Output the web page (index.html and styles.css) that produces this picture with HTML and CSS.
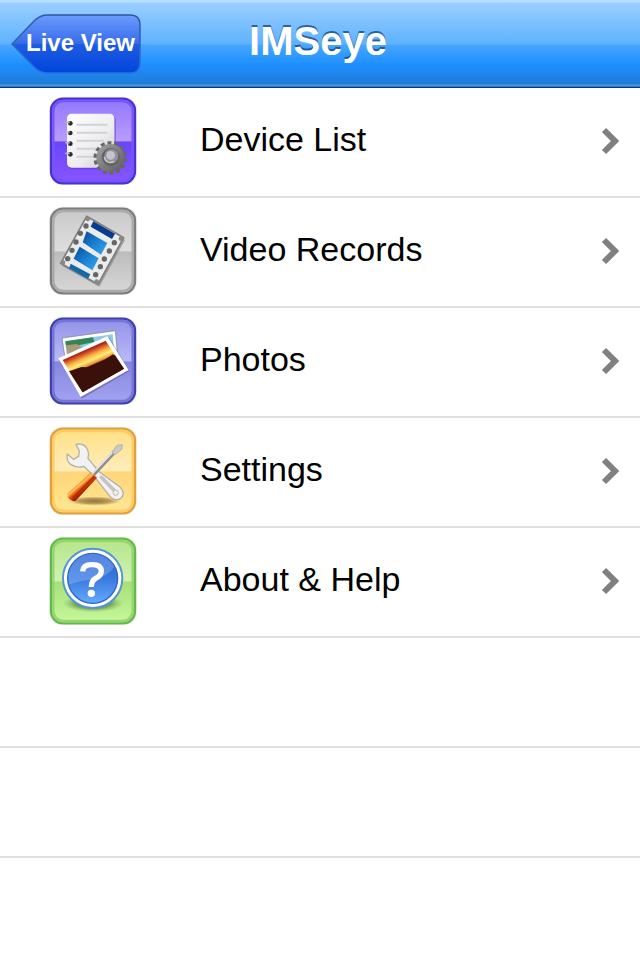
FILE: index.html
```html
<!DOCTYPE html>
<html lang="en">
<head>
<meta charset="utf-8">
<meta name="viewport" content="width=device-width">
<title>IMSeye</title>
<link rel="stylesheet" href="styles.css">
</head>
<body>
<header class="navbar">
  <button class="back" type="button">
    <svg class="back-shape" viewBox="0 0 130 60" preserveAspectRatio="none" aria-hidden="true">
      <defs>
        <linearGradient id="back-fill" x1="0" y1="0" x2="0" y2="1">
          <stop offset="0" stop-color="#6c9cff"/>
          <stop offset=".49" stop-color="#376ce9"/>
          <stop offset=".5" stop-color="#1f5ce2"/>
          <stop offset="1" stop-color="#0045dc"/>
        </linearGradient>
        <linearGradient id="back-edge" x1="0" y1="0" x2="0" y2="1">
          <stop offset="0" stop-color="#31569f"/>
          <stop offset=".5" stop-color="#2e65b8"/>
          <stop offset="1" stop-color="#2a70df"/>
        </linearGradient>
      </defs>
      <path d="M1 30 L24 6 Q30 1 36 1 H119 Q129 1 129 11 V49 Q129 59 119 59 H36 Q30 59 24 54Z" fill="url(#back-fill)" stroke="url(#back-edge)" stroke-width="1.5"/>
    </svg>
    <span class="back-label">Live View</span>
  </button>
  <h1 class="title">IMSeye</h1>
</header>
<main>
<ul class="menu">
  <li class="row"><a class="link" href="#devices">
    <svg class="icon" viewBox="0 0 294 294" aria-hidden="true">
      <defs>
        <linearGradient id="violet" x1="0" y1="0" x2="0" y2="1">
          <stop offset="0" stop-color="#9175ff"/><stop offset=".5" stop-color="#b99dff"/><stop offset=".51" stop-color="#6846fb"/><stop offset="1" stop-color="#8a55ff"/>
        </linearGradient>
        <linearGradient id="paper" x1="0" y1="0" x2="1" y2="1">
          <stop offset="0" stop-color="#fff"/><stop offset=".6" stop-color="#ededf0"/><stop offset="1" stop-color="#c4c4c8"/>
        </linearGradient>
        <linearGradient id="steel" x1="0" y1="0" x2="1" y2="1">
          <stop offset="0" stop-color="#a2a2a2"/><stop offset="1" stop-color="#5c5c5c"/>
        </linearGradient>
      </defs>
      <rect x="15" y="14" width="264" height="265" rx="40" fill="#f0f0f2"/>
      <rect x="21" y="20" width="252" height="254" rx="36" fill="url(#violet)" stroke="#4b30d4" stroke-width="7"/>
      <rect x="28" y="27" width="238" height="240" rx="30" fill="none" stroke="#7355fa" stroke-width="7"/>
      <rect x="72" y="70" width="144" height="162" rx="14" fill="#4b31a8" opacity=".4"/>
      <rect x="69" y="65" width="142" height="162" rx="14" fill="url(#paper)"/>
      <path d="M98 98H190M98 122H190M98 146H180M98 170H160M98 194H155" stroke="#d2d2d6" stroke-width="6"/>
      <g fill="#2d2b35"><circle cx="79" cy="94" r="7"/><circle cx="79" cy="123" r="7"/><circle cx="79" cy="155" r="7"/><circle cx="79" cy="187" r="7"/></g>
      <path d="M64 91H77M64 120H77M64 152H77M64 184H77" stroke="#b9b7c5" stroke-width="5"/>
      <circle cx="199" cy="198" r="45" fill="none" stroke="#666" stroke-width="11" stroke-dasharray="12 8.2"/>
      <circle cx="199" cy="198" r="42" fill="url(#steel)"/>
      <circle cx="200" cy="195" r="27" fill="#626262"/>
      <circle cx="202" cy="192" r="21" fill="#92929b"/>
      <circle cx="200" cy="190" r="13" fill="#c5c3cf"/>
      <path d="M181 195Q186 218 211 209" fill="none" stroke="#ccc" stroke-width="4"/>
    </svg>
    <span class="label">Device List</span>
    <svg class="chevron" viewBox="0 0 18 28" aria-hidden="true"><path d="M3 3 L14 14 L3 25"/></svg>
  </a></li>
  <li class="row"><a class="link" href="#videos">
    <svg class="icon" viewBox="0 0 294 294" aria-hidden="true">
      <defs>
        <linearGradient id="silver" x1="0" y1="0" x2="0" y2="1">
          <stop offset="0" stop-color="#c8c8c8"/><stop offset=".5" stop-color="#dedede"/><stop offset=".51" stop-color="#bcbcbc"/><stop offset="1" stop-color="#d8d8d8"/>
        </linearGradient>
        <linearGradient id="frame-blue" x1="0" y1="0" x2="1" y2="1">
          <stop offset="0" stop-color="#064a9b"/><stop offset=".6" stop-color="#2089d9"/><stop offset="1" stop-color="#39a5ed"/>
        </linearGradient>
      </defs>
      <rect x="15" y="14" width="264" height="265" rx="40" fill="#f2f2f2"/>
      <rect x="21" y="20" width="252" height="254" rx="36" fill="url(#silver)" stroke="#7d7d7d" stroke-width="7"/>
      <rect x="28" y="27" width="238" height="240" rx="30" fill="none" stroke="#aaa" stroke-width="7"/>
      <path d="M130 48L243 114L166 254L53 191Z" fill="#777" opacity=".55"/>
      <path d="M128 43L239 107L162 247L50 184Z" fill="#ebebeb" stroke="#7e7e7e" stroke-width="5" stroke-linejoin="round"/>
      <path d="M148 58L213 95L204 111L140 74Z" fill="#083d8c"/>
      <path d="M128 88L190 123L171 158L116 121Z" fill="url(#frame-blue)"/>
      <path d="M107 134L164 169L145 205L89 170Z" fill="url(#frame-blue)"/>
      <path d="M80 185L139 217L132 230L75 199Z" fill="#1269a5"/>
      <g fill="#666">
        <circle cx="126" cy="72" r="8"/><circle cx="109" cy="94" r="8"/><circle cx="96" cy="120" r="8"/><circle cx="84" cy="145" r="8"/><circle cx="71" cy="170" r="8"/>
        <circle cx="211" cy="122" r="8"/><circle cx="196" cy="147" r="8"/><circle cx="181" cy="171" r="8"/><circle cx="169" cy="194" r="8"/><circle cx="155" cy="218" r="8"/>
      </g>
      <g fill="#888">
        <circle cx="131" cy="51" r="7"/><circle cx="57" cy="182" r="7"/><circle cx="231" cy="110" r="7"/><circle cx="158" cy="239" r="7"/>
      </g>
    </svg>
    <span class="label">Video Records</span>
    <svg class="chevron" viewBox="0 0 18 28" aria-hidden="true"><path d="M3 3 L14 14 L3 25"/></svg>
  </a></li>
  <li class="row"><a class="link" href="#photos">
    <svg class="icon" viewBox="0 0 294 294" aria-hidden="true">
      <defs>
        <linearGradient id="indigo" x1="0" y1="0" x2="0" y2="1">
          <stop offset="0" stop-color="#9292e8"/><stop offset=".5" stop-color="#b9b9f6"/><stop offset=".51" stop-color="#8585df"/><stop offset="1" stop-color="#a4a4f2"/>
        </linearGradient>
        <linearGradient id="sunset" gradientUnits="userSpaceOnUse" x1="115" y1="105" x2="162" y2="214">
          <stop offset="0" stop-color="#8d1616"/><stop offset=".13" stop-color="#b52b19"/><stop offset=".28" stop-color="#ffac42"/><stop offset=".39" stop-color="#fff078"/><stop offset=".49" stop-color="#ed943a"/><stop offset=".53" stop-color="#35100b"/><stop offset="1" stop-color="#43150e"/>
        </linearGradient>
      </defs>
      <rect x="15" y="14" width="264" height="265" rx="40" fill="#f0f0f4"/>
      <rect x="21" y="20" width="252" height="254" rx="36" fill="url(#indigo)" stroke="#4040ad" stroke-width="7"/>
      <rect x="28" y="27" width="238" height="240" rx="30" fill="none" stroke="#7575d7" stroke-width="7"/>
      <path d="M54 78L214 56L222 145L67 163Z" fill="#fff" stroke="#75759f" stroke-width="2"/>
      <path d="M64 88L206 67L212 130L70 145Z" fill="#8fc9e9"/>
      <path d="M64 88L147 76L151 90L67 107Z" fill="#318653"/>
      <path d="M66 100L98 96L125 111L72 137Z" fill="#ab9b7b"/>
      <path d="M46 145L196 77L257 177L113 260Z" fill="#40406e" opacity=".4"/>
      <path d="M43 139L190 73L254 174L110 255Z" fill="#fff"/>
      <path d="M56 144L185 86L240 170L116 241Z" fill="url(#sunset)"/>
      <path d="M75 178L113 165L147 167L207 127L240 170L116 241Z" fill="#3b100b"/>
    </svg>
    <span class="label">Photos</span>
    <svg class="chevron" viewBox="0 0 18 28" aria-hidden="true"><path d="M3 3 L14 14 L3 25"/></svg>
  </a></li>
  <li class="row"><a class="link" href="#settings">
    <svg class="icon" viewBox="0 0 294 294" aria-hidden="true">
      <defs>
        <linearGradient id="amber" x1="0" y1="0" x2="0" y2="1">
          <stop offset="0" stop-color="#ffe184"/><stop offset=".5" stop-color="#ffecbb"/><stop offset=".51" stop-color="#ffd579"/><stop offset="1" stop-color="#ffe895"/>
        </linearGradient>
        <linearGradient id="handle" gradientUnits="userSpaceOnUse" x1="103" y1="178" x2="124" y2="202">
          <stop offset="0" stop-color="#e56c08"/><stop offset=".35" stop-color="#ffc35b"/><stop offset=".6" stop-color="#ed5a0b"/><stop offset="1" stop-color="#a52405"/>
        </linearGradient>
        <radialGradient id="tool-shadow"><stop offset="0" stop-color="#735a29" stop-opacity=".8"/><stop offset=".6" stop-color="#96763a" stop-opacity=".65"/><stop offset="1" stop-color="#b89349" stop-opacity="0"/></radialGradient>
      </defs>
      <rect x="15" y="14" width="264" height="265" rx="40" fill="#f5f3ef"/>
      <rect x="21" y="20" width="252" height="254" rx="36" fill="url(#amber)" stroke="#dfa13e" stroke-width="7"/>
      <rect x="28" y="27" width="238" height="240" rx="30" fill="none" stroke="#ffcb62" stroke-width="7"/>
      <ellipse cx="151" cy="237" rx="80" ry="14" fill="url(#tool-shadow)"/>
      <path d="M96 67Q122 62 131 84Q136 96 132 109L166 150L229 196Q245 214 232 227Q217 240 200 226L151 163L119 133Q99 140 80 127Q66 116 70 96L88 112L104 103L106 87Z" fill="#f2f2f2" stroke="#b5b1aa" stroke-width="4" stroke-linejoin="round"/>
      <path d="M172 166L212 207" stroke="#c4c4c6" stroke-width="11" stroke-linecap="round"/>
      <circle cx="215" cy="212" r="8" fill="#f7edda" stroke="#bbb" stroke-width="3"/>
      <path d="M148 158L210 91" stroke="#8e8e8e" stroke-width="12"/>
      <path d="M145 155L208 88" stroke="#e5e7eb" stroke-width="5"/>
      <path d="M204 90L219 70L235 68L234 81L212 99Z" fill="#c9c9cb" stroke="#a0a0a0" stroke-width="2"/>
      <path d="M70 215L141 151L159 167L94 238Q80 237 70 224Z" fill="url(#handle)"/>
      <path d="M86 228L151 163" stroke="#ae2b08" stroke-width="4"/>
    </svg>
    <span class="label">Settings</span>
    <svg class="chevron" viewBox="0 0 18 28" aria-hidden="true"><path d="M3 3 L14 14 L3 25"/></svg>
  </a></li>
  <li class="row"><a class="link" href="#help">
    <svg class="icon" viewBox="0 0 294 294" aria-hidden="true">
      <defs>
        <linearGradient id="green" x1="0" y1="0" x2="0" y2="1">
          <stop offset="0" stop-color="#b5e58b"/><stop offset=".5" stop-color="#d1f2b2"/><stop offset=".51" stop-color="#a7df78"/><stop offset="1" stop-color="#c6f89c"/>
        </linearGradient>
        <linearGradient id="ball" x1="0" y1="0" x2="0" y2="1">
          <stop offset="0" stop-color="#2762cc"/><stop offset=".5" stop-color="#3978df"/><stop offset="1" stop-color="#65aaff"/>
        </linearGradient>
        <radialGradient id="ball-shadow"><stop offset="0" stop-color="#315321"/><stop offset=".6" stop-color="#5b8a42" stop-opacity=".7"/><stop offset="1" stop-color="#7eb35b" stop-opacity="0"/></radialGradient>
      </defs>
      <rect x="15" y="14" width="264" height="265" rx="40" fill="#f1f4ef"/>
      <rect x="21" y="20" width="252" height="254" rx="36" fill="url(#green)" stroke="#65b94c" stroke-width="7"/>
      <rect x="28" y="27" width="238" height="240" rx="30" fill="none" stroke="#94d66d" stroke-width="7"/>
      <ellipse cx="147" cy="214" rx="91" ry="27" fill="url(#ball-shadow)"/>
      <circle cx="146" cy="139" r="89" fill="#fff" stroke="#5594d5" stroke-width="6"/>
      <circle cx="146" cy="139" r="75" fill="url(#ball)" stroke="#2b65bd" stroke-width="4"/>
      <path d="M73 139A73 73 0 0 1 211 105Q184 140 139 143Q101 147 76 158Z" fill="#a7c8ff" opacity=".35"/>
      <path d="M116 118Q117 98 144 98Q172 98 172 118Q172 131 154 140Q142 147 142 165" fill="none" stroke="#fff" stroke-width="16"/>
      <circle cx="142" cy="184" r="11" fill="#fff"/>
    </svg>
    <span class="label">About &amp; Help</span>
    <svg class="chevron" viewBox="0 0 18 28" aria-hidden="true"><path d="M3 3 L14 14 L3 25"/></svg>
  </a></li>
  <li class="row"></li>
  <li class="row"></li>
</ul>
</main>
</body>
</html>
```
FILE: styles.css
```css
* {
  box-sizing: border-box;
}

body {
  margin: 0;
  min-height: 100vh;
  background: #fff;
  color: #000;
  font-family: "Liberation Sans", Arial, sans-serif;
}

.navbar {
  display: grid;
  grid-template-columns: 1fr auto 1fr;
  align-items: center;
  height: 88px;
  padding: 0 15px 0 11px;
  border-bottom: 1px solid #053878;
  background: linear-gradient(#b9dfff 0, #b9dfff 2px, #9acfff 3px, #5eb2ff 44px, #47a6ff 45px, #1e90ff 64px, #1e7bd8 84px, #569fe3 85px, #2e70b7 87px);
}

.back {
  position: relative;
  justify-self: start;
  height: 60px;
  width: 130px;
  padding: 0 6px 2px 15px;
  border: 0;
  background: none;
  color: #fff;
  font: bold 24px/32px "Liberation Sans", Arial, sans-serif;
  white-space: nowrap;
}

.back-shape {
  position: absolute;
  inset: 0;
  width: 100%;
  height: 100%;
}

.back-label {
  position: relative;
}

.title {
  margin: 0;
  padding-bottom: 6px;
  color: #fff;
  font-size: 40px;
  line-height: 48px;
  text-shadow: 0 -2px 0 rgba(0, 35, 80, 0.6);
}

.menu {
  margin: 0;
  padding: 0;
  list-style: none;
}

.row {
  height: 110px;
  border-bottom: 2px solid #e0e0e0;
}

.link {
  display: flex;
  align-items: center;
  height: 100%;
  padding: 0 21px 2px 44px;
  color: inherit;
  text-decoration: none;
}

.icon {
  flex: none;
  width: 98px;
  height: 98px;
}

.label {
  flex: 1;
  padding: 0 0 4px 58px;
  font-size: 34px;
  line-height: 40px;
}

.chevron {
  flex: none;
  width: 18px;
  height: 28px;
  fill: none;
  stroke: #808080;
  stroke-width: 6;
}
```
